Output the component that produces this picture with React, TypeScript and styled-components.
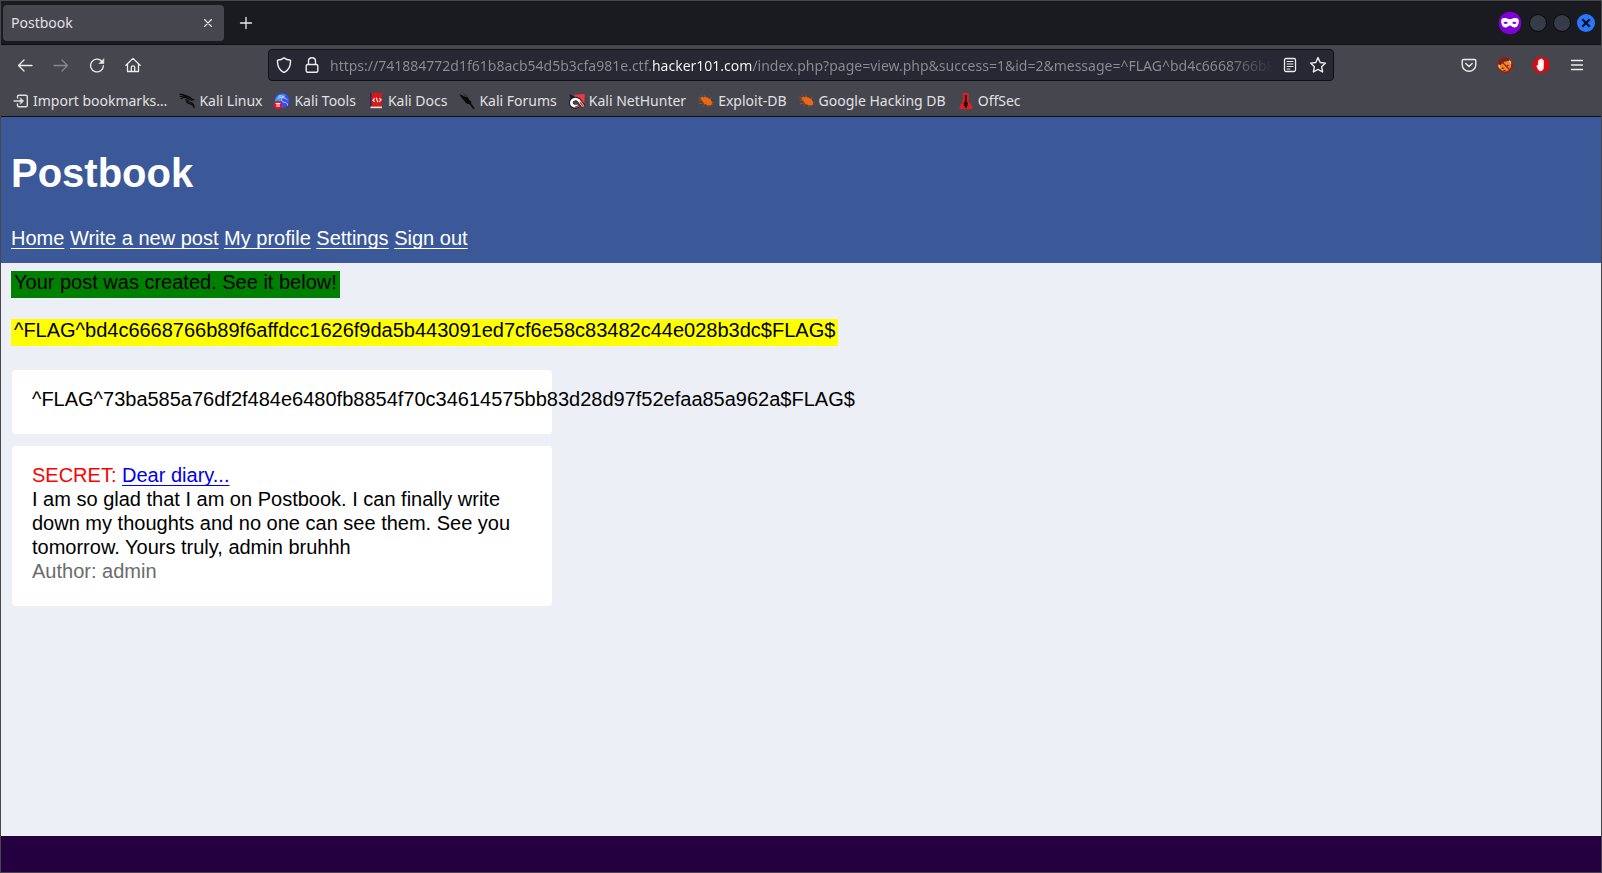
import React from "react";
import styled, { createGlobalStyle } from "styled-components";

const GlobalStyle = createGlobalStyle`
  *, *::before, *::after { box-sizing: border-box; }
  body { margin: 0; background: #250040; }
  svg { display: block; flex: none; }
`;

/* ---------- window ---------- */

const Window = styled.div`
  display: flex;
  flex-direction: column;
  min-height: 100vh;
  border: 1px solid #47474b;
  font-family: "Noto Sans", "Open Sans", sans-serif;
  font-size: 14px;
  color: #e0e0e2;
`;

const TabBar = styled.div`
  display: flex;
  align-items: center;
  height: 44px;
  padding: 0 3px 0 2px;
  background: #1a1b20;
  border-bottom: 1px solid #0e0f12;
`;

const Tab = styled.div`
  display: flex;
  align-items: center;
  justify-content: space-between;
  width: 221px;
  height: 36px;
  padding: 0 6px 0 8px;
  border-radius: 4px;
  background: #46464f;
`;

const IconButton = styled.button<{ $width?: number; $dim?: boolean }>`
  display: flex;
  align-items: center;
  justify-content: center;
  width: ${({ $width = 36 }) => $width}px;
  height: 32px;
  padding: 0;
  border: 0;
  background: none;
  color: ${({ $dim }) => ($dim ? "#87878d" : "#ececee")};
`;

const NewTab = styled(IconButton)`
  margin-left: 4px;
`;

const WindowControls = styled.div`
  display: flex;
  align-items: center;
  margin-left: auto;
`;

const PrivateBadge = styled.span`
  display: flex;
  margin-right: 4px;
`;

const NavBar = styled.div`
  display: flex;
  align-items: center;
  height: 40px;
  padding: 0 6px;
  background: #46464f;
`;

const Spacer = styled.div`
  flex: 0 1 117px;
`;

const UrlBar = styled.div`
  display: flex;
  align-items: center;
  flex: 1;
  min-width: 0;
  height: 32px;
  padding: 0 1px;
  border: 1px solid #101118;
  border-radius: 4px;
  background: #282834;
`;

/* The gradient shows through the glyphs, so its middle band lights up the host name. */
const UrlInput = styled.input`
  flex: 1;
  min-width: 0;
  height: 28px;
  margin: 0 2px 0 4px;
  padding: 0;
  border: 0;
  outline: 0;
  font: inherit;
  color: transparent;
  background: linear-gradient(90deg, #8c8c94 322px, #fbfbfe 322px, #fbfbfe 423px, #8c8c94 423px);
  background-clip: text;
  -webkit-background-clip: text;
  mask-image: linear-gradient(to left, transparent, #000 48px);
`;

const BookmarkBar = styled.nav`
  display: flex;
  align-items: center;
  gap: 12px;
  height: 32px;
  padding: 0 12px;
  background: #46464f;
  border-bottom: 1px solid #0e0f14;
`;

const Bookmark = styled.a`
  display: flex;
  align-items: center;
  gap: 4px;
  color: inherit;
  line-height: 20px;
  white-space: nowrap;
  text-decoration: none;
`;

const BottomStrip = styled.div`
  height: 36px;
  background: #250040;
`;

/* ---------- Postbook page ---------- */

const Page = styled.div`
  flex: 1;
  background: #eceff5;
  color: #000;
  font-family: "Liberation Sans", Arial, Helvetica, sans-serif;
  font-size: 20px;
  line-height: 24px;
`;

const PageHeader = styled.header`
  padding: 32px 10px 13px;
  background: #3b5998;
  color: #fff;
`;

const PageTitle = styled.h1`
  margin: 0 0 29px;
  font-size: 40px;
  line-height: 48px;
`;

const TextLink = styled.a<{ $color: string }>`
  color: ${({ $color }) => $color};
  text-decoration-thickness: 1px;
  text-underline-offset: 3px;
  text-decoration-skip-ink: none;
`;

const Main = styled.main`
  display: flex;
  flex-direction: column;
  align-items: flex-start;
  padding: 8px 10px;
`;

const Notice = styled.p<{ $color: string }>`
  margin: 0 0 21px;
  padding: 0 3px 5px;
  line-height: 22px;
  background: ${({ $color }) => $color};
`;

const Posts = styled.div`
  display: flex;
  flex-direction: column;
  gap: 12px;
  width: 100%;
  max-width: 542px;
  padding: 3px 1px;
`;

const Post = styled.article`
  padding: 17px 20px 23px;
  border-radius: 4px;
  background: #fff;
`;

const PostText = styled.p<{ $color?: string }>`
  margin: 0;
  color: ${({ $color = "#000" }) => $color};
`;

/* ---------- icons ---------- */

const line = {
  fill: "none",
  stroke: "currentColor",
  strokeWidth: 1.3,
  strokeLinecap: "round" as const,
  strokeLinejoin: "round" as const,
};

const CloseIcon = () => (
  <svg width="16" height="16" viewBox="0 0 16 16" {...line} strokeWidth={1.1}><path d="M4.5 4.5l7 7M11.5 4.5l-7 7" /></svg>
);
const PlusIcon = () => (
  <svg width="16" height="16" viewBox="0 0 16 16" {...line}><path d="M8 2.5v11M2.5 8h11" /></svg>
);
const MaskIcon = () => (
  <svg width="24" height="24" viewBox="0 0 24 24">
    <circle cx="12" cy="12" r="11.3" fill="#8000d7" />
    <path fill="#fff" fillRule="evenodd" d="M3.2 9.6C3.4 7.4 5.4 7 7.4 7.1c1.9.1 3.2 1.2 4.6 1.2s2.7-1.1 4.6-1.2c2-.1 4 .3 4.2 2.5.2 3.5-1.4 7-4.3 7-2.1 0-3.1-2.2-4.5-2.2s-2.4 2.2-4.5 2.2c-2.9 0-4.5-3.5-4.3-7zM5.4 11.9c1.2 1.5 3.3 1.5 4.5.1-1.1-1.7-3.4-1.8-4.5-.1zm8.700.1c1.2 1.4 3.3 1.4 4.5-.1-1.1-1.7-3.4-1.6-4.5.1z" />
  </svg>
);
const DotIcon = () => (
  <svg width="20" height="20" viewBox="0 0 20 20"><circle cx="10" cy="10" r="8.5" fill="#353b48" stroke="#08090c" /></svg>
);
const CloseWindowIcon = () => (
  <svg width="20" height="20" viewBox="0 0 20 20">
    <circle cx="10" cy="10" r="9" fill="#2777ff" />
    <path d="M6.2 6.2l7.6 7.6M13.8 6.2l-7.6 7.6" stroke="#0a1020" strokeWidth="2.3" />
  </svg>
);
const BackIcon = () => (
  <svg width="16" height="16" viewBox="0 0 16 16" {...line}><path d="M15 8.5H1.500M7 3L1.500 8.500 7 14" /></svg>
);
const ForwardIcon = () => (
  <svg width="16" height="16" viewBox="0 0 16 16" {...line}><path d="M1 8.5h13.500M9 3l5.500 5.500L9 14" /></svg>
);
const ReloadIcon = () => (
  <svg width="16" height="16" viewBox="0 0 16 16" {...line}>
    <path d="M12.8 4.3A6.4 6.4 0 1 0 14.4 8.7" />
    <path d="M14.8 2v4.500h-4.500z" fill="currentColor" strokeWidth=".6" />
  </svg>
);
const HomeIcon = () => (
  <svg width="16" height="16" viewBox="0 0 16 16" {...line}>
    <path d="M.9 8.3L8 1.4l7.1 6.9M2.5 7.2v7.3h11V7.2M6.3 14.500v-4.300c0-1.800 3.400-1.800 3.400 0v4.300" />
  </svg>
);
const ShieldIcon = () => (
  <svg width="16" height="16" viewBox="0 0 16 16" {...line} strokeWidth={1.4}>
    <path d="M8 .9c2 1.600 4 2.200 6.500 2.400C14.800 9 12.800 13.200 8 15.600 3.200 13.200 1.200 9 1.500 3.300 4 3.100 6 2.500 8 .9z" />
  </svg>
);
const LockIcon = () => (
  <svg width="16" height="16" viewBox="0 0 16 16" {...line} strokeWidth={1.4}>
    <rect x="2.2" y="7.5" width="11.6" height="7.8" rx="1.5" />
    <path d="M4.500 7.300V4.200C4.500-.4 11.500-.4 11.500 4.200v3.100" />
  </svg>
);
const ReaderIcon = () => (
  <svg width="16" height="16" viewBox="0 0 16 16" {...line}>
    <rect x="2.5" y="1.5" width="11" height="13" rx="1.5" />
    <path d="M5 4.500h6M5 7h6M5 9.500h6M5 12h3" strokeWidth="1" />
  </svg>
);
const StarIcon = () => (
  <svg width="18" height="18" viewBox="0 0 18 18" {...line} strokeWidth={1.4}>
    <path d="M9 1.600l2.200 4.900 5.300.6-3.900 3.600 1 5.300L9 13.400 4.400 16l1-5.300L1.500 7.100l5.300-.6z" />
  </svg>
);
const PocketIcon = () => (
  <svg width="16" height="16" viewBox="0 0 16 16" {...line} strokeWidth={1.4}>
    <path d="M2.500 2.500h11c.8 0 1.300.5 1.300 1.300V7.500c0 9-13.600 9-13.600 0V3.800c0-.8.500-1.300 1.300-1.300zM4.800 6.500L8 9.500l3.200-3" />
  </svg>
);
const FoxIcon = () => (
  <svg width="16" height="16" viewBox="0 0 16 16">
    <circle cx="8" cy="8" r="7.3" fill="#55302f" />
    <path d="M2.500 9L5 6.500 8 4.500l3-.5 3-1.500.2 3.500-.2 4-1.500 3L8 14.900l-3.500-1.400-2.500-2.500z" fill="#e8891e" />
    <path d="M1.200 7l1.800 1.500-.5 3.500-1.500-2zM13 2.200l1.700 2.300-.3 3-2.200-3z" fill="#f3ece6" />
    <path d="M4.800 11l1.700.4M9.800 9l1.700-.7M6.500 13.500h2" stroke="#3a1d0a" strokeWidth="1.2" />
    <circle cx="8" cy="8" r="7.3" fill="none" stroke="#b90f0f" strokeWidth="1.2" />
    <path d="M2.900 2.900l10.200 10.200" stroke="#b90f0f" strokeWidth="1.3" />
  </svg>
);
const HandIcon = () => (
  <svg width="16" height="16" viewBox="0 0 16 16">
    <path d="M4.700 0h6.600L16 4.700v6.600L11.300 16H4.700L0 11.300V4.700z" fill="#e2060f" />
    <path d="M5.300 12.500L3.900 9.300c-.3-.9.500-1.200 1-.6l.5.700V4.100c0-.8 1.100-.8 1.200 0V3c.1-.9 1.200-.9 1.300 0v-.5c.1-.8 1.200-.8 1.300 0v1c.1-.8 1.200-.8 1.200.1v6.100c0 2.500-.8 3.900-2.500 4-1.300.1-2-.3-2.600-1.200z" fill="#fff" stroke="#fff" strokeWidth=".7" />
  </svg>
);
const MenuIcon = () => (
  <svg width="16" height="16" viewBox="0 0 16 16" {...line}><path d="M2.500 3.500h11M2.500 8h11M2.500 12.500h11" /></svg>
);

const ImportIcon = () => (
  <svg width="16" height="16" viewBox="0 0 16 16" {...line} strokeWidth={1.4}>
    <path d="M4.500 5V3.500c0-.8.500-1.300 1.300-1.300h7c.9 0 1.500.5 1.500 1.300v9c0 .8-.6 1.300-1.500 1.300h-7c-.8 0-1.300-.5-1.300-1.300V11M1 8h7" />
    <path d="M7.500 5l3.200 3-3.200 3z" fill="currentColor" strokeWidth=".6" />
  </svg>
);
const DragonIcon = () => (
  <svg width="16" height="16" viewBox="0 0 16 16" fill="none" stroke="#0c0c0f">
    <path d="M.3 1.200c2.500 0 5 .4 7 1.700M.8 3.600c2.300-.7 5-.7 7.200.2M1.700 5.800C4 4.300 7 4 9.500 5" strokeWidth="1.2" />
    <path d="M6.500 2.600c2.500.6 5 1.500 6.800 3.700l1.300.5-1.800.3c-2-.4-4-.9-4.300.5-.2 1.500 2.500 1.400 4.300 2.300 1.800.9 2.400 3 2.500 5.300-.5-2-1.400-3.300-3.200-3.900C9.500 10.500 7 9.800 7 7.500 7 5.500 9 5 10.500 5.200" strokeWidth="1.1" fill="#0c0c0f" fillOpacity=".3" />
  </svg>
);
const ToolsIcon = () => (
  <svg width="16" height="16" viewBox="0 0 16 16" fill="none">
    <circle cx="8.2" cy="7.6" r="7.3" fill="#3a4df0" />
    <path d="M1 6.500C2.500 1.500 8 0 12 2L7 8l-4 3c-1.500-1-2.200-3-2-4.500z" fill="#3f8ff2" />
    <path d="M3.500 5.500c3.500-1.500 7-1.500 10 1.500M8 5.500c-1.500 3 1 3.500 3.500 4 1.300.4 2 1.500 2 3M4.500 3.300c2.500-.8 4-.5 6 .7" stroke="#c3dcff" strokeWidth="1" />
    <circle cx="4" cy="12" r="4" fill="#e3122c" />
    <path d="M1.700 10.500h4.600M3.100 10.500v3.500M5 10.500v3.500" stroke="#fff" strokeWidth="1" />
  </svg>
);
const DocsIcon = () => (
  <svg width="16" height="16" viewBox="0 0 16 16">
    <path d="M2 0h12v13.500H2z" fill="#dc1616" />
    <path d="M2 0h1.500v14H2z" fill="#232a55" />
    <path d="M2.500 13.500H14v1.700H2.500z" fill="#e9dcdc" />
    <path d="M6.800 5.200L4.900 7.200l1.900 1.600M11.200 5.200l1.900 1.700-1.900 2M8.200 4.700l1.700 4.600" fill="none" stroke="#fff" strokeWidth="1.1" />
  </svg>
);
const ForumsIcon = () => (
  <svg width="16" height="16" viewBox="0 0 16 16" fill="#0a0a0c">
    <path d="M.2 1l3.500 1.500 3 1.500 2.500.6 1 2.400 2.200 1.800-.3 1.700 4 5.300-2.300-.3-3.300-4.200-2.900-.8-2.600-3L2.800 4.900z" />
    <path d="M4.500 .7l4.200 3.500" stroke="#0a0a0c" strokeWidth=".6" />
  </svg>
);
const NetHunterIcon = () => (
  <svg width="16" height="16" viewBox="0 0 16 16" fill="none">
    <path d="M4.500 1.800L15.800 1l-.5 9-3.300 1z" fill="#f0393c" />
    <path d="M.5 1l4.500 2.500L2 7z" fill="#1a1a20" />
    <path d="M14.500 13.500L9.800 7.200C6.500 4.300 2 6.600 2.200 9.800c.2 3.600 4.300 4.700 7 2.700" stroke="#15151b" strokeWidth="4.2" />
    <path d="M14.300 13.500L9.600 7.200C6.500 4.600 2.200 6.800 2.400 9.800c.2 3.200 3.900 4.200 6.600 2.500" stroke="#fff" strokeWidth="2.7" />
    <path d="M11 9l3.300 4.500M6 14c1.400 0 2.400-.3 3.500-1" stroke="#ec2f37" strokeWidth="1.5" />
  </svg>
);
const BugIcon = () => (
  <svg width="16" height="16" viewBox="0 0 16 16" fill="#f06510">
    <path d="M.3 4.200l4 1.500M.5 7l4 .5M.8 10.800l5-.8M4.500 13.500l2.800-2.700M6.300 1.800l1.500 3M10 14v-3M15.700 9.500l-4-1M13.300 4l-2 2.500M3 2.300l3 3" stroke="#b5541c" strokeWidth=".7" />
    <path d="M2.300 4.800l2-.8 1.300.5 1.400-.9 1.600.8 1.200 0 1.300 1.400 1.300.3.600 1.500 1 .8-.2 1.500.9 1.500-1.500.3-1 1.100-1.600-.7-1.300.5-1.300-1.300-1.400-.1-1-1.800-1-.6-.4-1.500-1.100-.8z" />
  </svg>
);
const OffSecIcon = () => (
  <svg width="16" height="16" viewBox="0 0 16 16">
    <path d="M4.800 0h6v8.500l3.200 4.500.3 3H1.500l.4-3 2.900-4.500z" fill="#e01f26" />
    <path d="M6.800 2h2v6.500l1.300 2.300-.9.700 1.100 1.500H8.700V15H6.900v-2H5.400l1-1.500-.9-.7 1.300-2.300z" fill="#2b0508" />
  </svg>
);

/* ---------- data ---------- */

const url =
  "https://741884772d1f61b8acb54d5b3cfa981e.ctf.hacker101.com/index.php?page=view.php&success=1&id=2&message=^FLAG^bd4c6668766b89f6affdcc1626f9da5b443091ed7cf6e58c83482c44e028b3dc$FLAG$";

const bookmarks = [
  { label: "Import bookmarks…", Icon: ImportIcon },
  { label: "Kali Linux", Icon: DragonIcon },
  { label: "Kali Tools", Icon: ToolsIcon },
  { label: "Kali Docs", Icon: DocsIcon },
  { label: "Kali Forums", Icon: ForumsIcon },
  { label: "Kali NetHunter", Icon: NetHunterIcon },
  { label: "Exploit-DB", Icon: BugIcon },
  { label: "Google Hacking DB", Icon: BugIcon },
  { label: "OffSec", Icon: OffSecIcon },
];

const pageLinks = ["Home", "Write a new post", "My profile", "Settings", "Sign out"];

export default function App() {
  return (
    <>
      <GlobalStyle />
      <Window>
        <TabBar>
          <Tab>
            Postbook
            <IconButton $width={20} aria-label="Close tab"><CloseIcon /></IconButton>
          </Tab>
          <NewTab aria-label="New tab"><PlusIcon /></NewTab>
          <WindowControls>
            <PrivateBadge><MaskIcon /></PrivateBadge>
            <IconButton $width={24} aria-label="Minimize"><DotIcon /></IconButton>
            <IconButton $width={24} aria-label="Maximize"><DotIcon /></IconButton>
            <IconButton $width={24} aria-label="Close window"><CloseWindowIcon /></IconButton>
          </WindowControls>
        </TabBar>

        <NavBar>
          <IconButton aria-label="Back"><BackIcon /></IconButton>
          <IconButton $dim disabled aria-label="Forward"><ForwardIcon /></IconButton>
          <IconButton aria-label="Reload"><ReloadIcon /></IconButton>
          <IconButton aria-label="Home"><HomeIcon /></IconButton>
          <Spacer />
          <UrlBar>
            <IconButton $width={28} aria-label="Tracking protection"><ShieldIcon /></IconButton>
            <IconButton $width={28} aria-label="Site security"><LockIcon /></IconButton>
            <UrlInput aria-label="Address" type="text" defaultValue={url} spellCheck={false} />
            <IconButton $width={28} aria-label="Reader view"><ReaderIcon /></IconButton>
            <IconButton $width={28} aria-label="Bookmark this page"><StarIcon /></IconButton>
          </UrlBar>
          <Spacer />
          <IconButton aria-label="Save to Pocket"><PocketIcon /></IconButton>
          <IconButton aria-label="FoxyProxy"><FoxIcon /></IconButton>
          <IconButton aria-label="Ad blocker"><HandIcon /></IconButton>
          <IconButton aria-label="Menu"><MenuIcon /></IconButton>
        </NavBar>

        <BookmarkBar aria-label="Bookmarks">
          {bookmarks.map(({ label, Icon }) => (
            <Bookmark key={label} href="#"><Icon />{label}</Bookmark>
          ))}
        </BookmarkBar>

        <Page>
          <PageHeader>
            <PageTitle>Postbook</PageTitle>
            <nav aria-label="Postbook">
              {pageLinks.map((label) => (
                <React.Fragment key={label}>
                  <TextLink href="#" $color="#fff">{label}</TextLink>{" "}
                </React.Fragment>
              ))}
            </nav>
          </PageHeader>
          <Main>
            <Notice $color="#008000">Your post was created. See it below!</Notice>
            <Notice $color="#ffff00">^FLAG^bd4c6668766b89f6affdcc1626f9da5b443091ed7cf6e58c83482c44e028b3dc$FLAG$</Notice>
            <Posts>
              <Post>
                <PostText>^FLAG^73ba585a76df2f484e6480fb8854f70c34614575bb83d28d97f52efaa85a962a$FLAG$</PostText>
              </Post>
              <Post>
                <PostText $color="#ff0000">
                  SECRET: <TextLink href="#" $color="#0000ee">Dear diary...</TextLink>
                </PostText>
                <PostText>
                  I am so glad that I am on Postbook. I can finally write down my thoughts and no one can see
                  them. See you tomorrow. Yours truly, admin bruhhh
                </PostText>
                <PostText $color="#6b6b6b">Author: admin</PostText>
              </Post>
            </Posts>
          </Main>
        </Page>
        <BottomStrip />
      </Window>
    </>
  );
}
